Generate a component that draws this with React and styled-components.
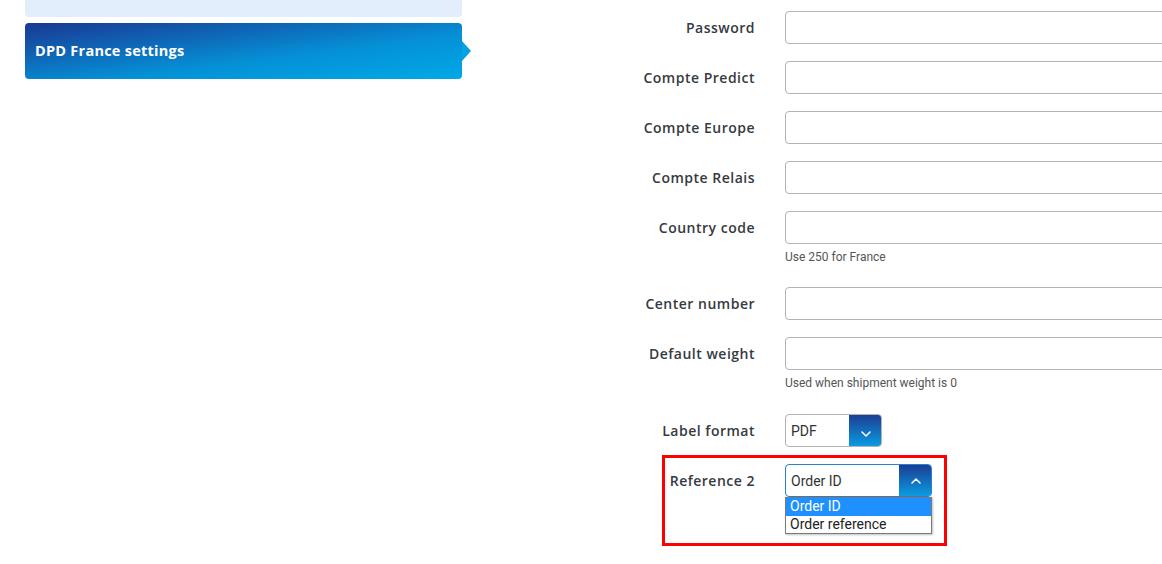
import styled, { createGlobalStyle } from "styled-components";

const GlobalStyle = createGlobalStyle`
  body {
    margin: 0;
    background: #fff;
    overflow: hidden;
    font-family: "Open Sans", "Liberation Sans", sans-serif;
  }
`;

const Page = styled.div`
  display: flex;
  width: 1162px;
  height: 564px;
  overflow: hidden;
`;

const Sidebar = styled.nav`
  display: flex;
  flex-direction: column;
  gap: 6px;
  width: 437px;
  margin-left: 25px;
  flex-shrink: 0;
`;

const MenuItem = styled.div`
  position: relative;
  display: flex;
  align-items: center;
  box-sizing: border-box;
  height: ${(p) => (p.$cut ? "17px" : "56px")};
  padding: 0 10px 1px;
  border-radius: ${(p) => (p.$cut ? "0 0 4px 4px" : "4px")};
  background: ${(p) =>
    p.$active
      ? "linear-gradient(to bottom right, #1a3893, #0590d6 60%, #00a9e7)"
      : "#e3eefd"};
  color: #fff;
  font-family: "Open Sans", "Liberation Sans", sans-serif;
  font-size: 14.5px;
  font-weight: 700;
  letter-spacing: 0.25px;

  ${(p) =>
    p.$active &&
    `
    &::after {
      content: "";
      position: absolute;
      right: -9px;
      top: 50%;
      margin-top: -10px;
      border-style: solid;
      border-width: 10px 0 10px 9px;
      border-color: transparent transparent transparent #03a2e2;
    }
  `}
`;

const Form = styled.form`
  display: flex;
  flex-direction: column;
  gap: 17px;
  margin-left: 123px;
  padding-top: 11px;
  flex-shrink: 0;
`;

const Row = styled.div`
  position: relative;
  display: flex;
  align-items: flex-start;
  gap: 30px;
  margin-top: ${(p) => (p.$shift ? "1px" : "0")};
`;

const Label = styled.label`
  width: 170px;
  text-align: right;
  line-height: 33px;
  font-family: "Open Sans", "Liberation Sans", sans-serif;
  font-size: 14px;
  font-weight: 600;
  letter-spacing: 0.5px;
  color: #363a41;
`;

const Field = styled.div`
  display: flex;
  flex-direction: column;
`;

const Input = styled.input`
  box-sizing: border-box;
  width: 420px;
  height: 33px;
  border: 1px solid #b3b3b3;
  border-radius: 4px;
  background: #fff;
  outline: none;
`;

const Help = styled.div`
  margin: 6px 0;
  line-height: 14px;
  font-family: Roboto, "Liberation Sans", sans-serif;
  font-size: 12px;
  color: #555;
`;

const SelectWrap = styled.div`
  position: relative;
  width: ${(p) => p.$width}px;
`;

const SelectBox = styled.div`
  box-sizing: border-box;
  display: flex;
  height: 33px;
  border: 1px solid ${(p) => (p.$open ? "#2f7fcf" : "#b3b3b3")};
  border-radius: 4px;
  overflow: hidden;
  background: #fff;
`;

const SelectValue = styled.div`
  flex: 1;
  padding: 1px 0 0 5px;
  line-height: 31px;
  font-family: Roboto, "Liberation Sans", sans-serif;
  font-size: 14px;
  color: #333;
`;

const SelectButton = styled.div`
  display: flex;
  align-items: center;
  justify-content: center;
  width: 33px;
  margin: -1px -1px -1px 0;
  padding-top: ${(p) => (p.$open ? "0" : "6px")};
  box-sizing: border-box;
  background: linear-gradient(to bottom, #1c3a92, #0a9fe4);
`;

const Options = styled.ul`
  position: absolute;
  top: 100%;
  left: 0;
  right: 0;
  margin: 0;
  padding: 0;
  list-style: none;
  border: 1px solid #7a7a7a;
  background: #fff;
  box-shadow: 1px 1px 2px rgba(0, 0, 0, 0.25);
  z-index: 2;
`;

const Option = styled.li`
  padding: 0 4px;
  line-height: 17.5px;
  font-family: Roboto, "Liberation Sans", sans-serif;
  font-size: 14px;
  color: ${(p) => (p.$selected ? "#fff" : "#222")};
  background: ${(p) => (p.$selected ? "#1e90ff" : "#fff")};
`;

const Highlight = styled.div`
  position: absolute;
  left: 77px;
  top: -9px;
  width: 285px;
  height: 91px;
  box-sizing: border-box;
  border: 3px solid #ff0000;
  pointer-events: none;
`;

function Chevron({ up }) {
  return (
    <svg width="10" height="6" viewBox="0 0 10 6" fill="none">
      <path
        d={up ? "M1 5 L5 1 L9 5" : "M1 1 L5 5 L9 1"}
        stroke="#fff"
        strokeWidth="1.5"
        strokeLinecap="round"
        strokeLinejoin="round"
      />
    </svg>
  );
}

function Select({ value, width, open, options }) {
  return (
    <SelectWrap $width={width}>
      <SelectBox $open={open}>
        <SelectValue>{value}</SelectValue>
        <SelectButton $open={open}>
          <Chevron up={open} />
        </SelectButton>
      </SelectBox>
      {open && (
        <Options>
          {options.map((o) => (
            <Option key={o} $selected={o === value}>
              {o}
            </Option>
          ))}
        </Options>
      )}
    </SelectWrap>
  );
}

const textFields = [
  { label: "Password" },
  { label: "Compte Predict" },
  { label: "Compte Europe" },
  { label: "Compte Relais" },
  { label: "Country code", help: "Use 250 for France" },
  { label: "Center number" },
  { label: "Default weight", help: "Used when shipment weight is 0" },
];

export default function App() {
  return (
    <Page>
      <GlobalStyle />
      <Sidebar>
        <MenuItem $cut />
        <MenuItem $active>DPD France settings</MenuItem>
      </Sidebar>
      <Form>
        {textFields.map((f) => (
          <Row key={f.label}>
            <Label>{f.label}</Label>
            <Field>
              <Input type="text" />
              {f.help && <Help>{f.help}</Help>}
            </Field>
          </Row>
        ))}
        <Row $shift>
          <Label>Label format</Label>
          <Select value="PDF" width={97} />
        </Row>
        <Row>
          <Label>Reference 2</Label>
          <Select
            value="Order ID"
            width={147}
            open
            options={["Order ID", "Order reference"]}
          />
          <Highlight />
        </Row>
      </Form>
    </Page>
  );
}
